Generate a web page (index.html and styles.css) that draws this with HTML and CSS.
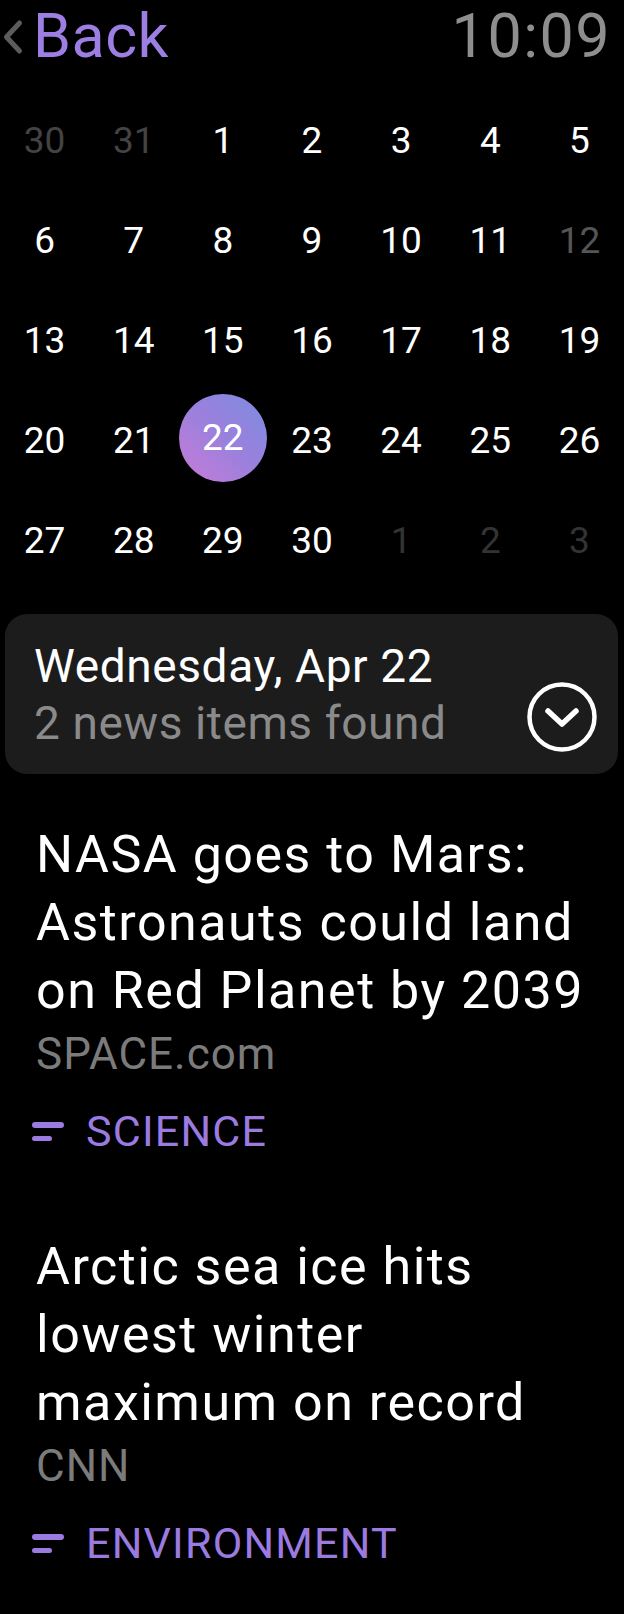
FILE: index.html
```html
<!DOCTYPE html>
<html>
<head>
<meta charset="utf-8">
<link rel="stylesheet" href="styles.css">
</head>
<body>
<div class="screen">
  <header class="topbar">
    <div class="back">
      <svg class="back-chev" width="26" height="72" viewBox="0 0 26 72"><path d="M19.5 23 L6.5 37 L19.5 51" fill="none" stroke="#5c5c5c" stroke-width="5" stroke-linecap="round" stroke-linejoin="round"/></svg>
      <span class="back-label">Back</span>
    </div>
    <div class="time">10:09</div>
  </header>

  <div class="calendar">
    <div class="day prev">30</div><div class="day prev">31</div><div class="day">1</div><div class="day">2</div><div class="day">3</div><div class="day">4</div><div class="day">5</div>
    <div class="day">6</div><div class="day">7</div><div class="day">8</div><div class="day">9</div><div class="day">10</div><div class="day">11</div><div class="day off">12</div>
    <div class="day">13</div><div class="day">14</div><div class="day">15</div><div class="day">16</div><div class="day">17</div><div class="day">18</div><div class="day">19</div>
    <div class="day">20</div><div class="day">21</div><div class="day selected"><span class="sel-circle">22</span></div><div class="day">23</div><div class="day">24</div><div class="day">25</div><div class="day">26</div>
    <div class="day">27</div><div class="day">28</div><div class="day">29</div><div class="day">30</div><div class="day next">1</div><div class="day next">2</div><div class="day next">3</div>
  </div>

  <div class="summary">
    <div class="summary-text">
      <div class="summary-date">Wednesday, Apr 22</div>
      <div class="summary-count">2 news items found</div>
    </div>
    <svg class="summary-icon" width="70" height="70" viewBox="0 0 70 70"><circle cx="35" cy="35" r="32.5" fill="none" stroke="#fff" stroke-width="4.5"/><path d="M21 29 L35 42 L49 29" fill="none" stroke="#fff" stroke-width="5.5" stroke-linecap="round" stroke-linejoin="round"/></svg>
  </div>

  <div class="news">
    <article class="item">
      <h2 class="headline">NASA goes to Mars: Astronauts could land on Red Planet by 2039</h2>
      <div class="source">SPACE.com</div>
      <div class="category">
        <span class="cat-icon"><span class="bar long"></span><span class="bar short"></span></span>
        <span class="cat-label">SCIENCE</span>
      </div>
    </article>
    <article class="item">
      <h2 class="headline">Arctic sea ice hits lowest winter maximum on record</h2>
      <div class="source">CNN</div>
      <div class="category">
        <span class="cat-icon"><span class="bar long"></span><span class="bar short"></span></span>
        <span class="cat-label">ENVIRONMENT</span>
      </div>
    </article>
  </div>
</div>
</body>
</html>
```

FILE: styles.css
```css
html, body {
  margin: 0;
  padding: 0;
  background: #000;
}

body {
  font-family: Roboto, "Liberation Sans", sans-serif;
  color: #fff;
}

.screen {
  width: 624px;
  min-height: 1614px;
  display: flex;
  flex-direction: column;
}

.topbar {
  display: flex;
  justify-content: space-between;
  align-items: flex-start;
  height: 72px;
}

.back {
  display: flex;
  align-items: flex-start;
}

.back-chev {
  display: block;
  margin-left: 0;
  margin-right: 7px;
}

.back-label {
  font-size: 61px;
  line-height: 72px;
  letter-spacing: 0.5px;
  color: #9d7ee3;
}

.time {
  font-size: 61px;
  line-height: 72px;
  letter-spacing: 1.5px;
  color: #8e8e8e;
  margin-right: 13px;
}

.calendar {
  margin-top: 19px;
  display: grid;
  grid-template-columns: repeat(7, 1fr);
  grid-auto-rows: 100px;
}

.day {
  display: flex;
  align-items: center;
  justify-content: center;
  font-size: 37px;
  line-height: 100px;
  color: #fff;
}

.day.prev { color: #434343; }
.day.off { color: #555; }
.day.next { color: #333; }

.sel-circle {
  width: 88px;
  height: 88px;
  border-radius: 50%;
  display: flex;
  align-items: center;
  justify-content: center;
  line-height: 88px;
  background: linear-gradient(to top right, #c97bd7 0%, #9b80dd 50%, #7c8ce0 100%);
  margin-top: -6px;
}

.summary {
  margin: 23px 6px 0 5px;
  background: #1c1c1c;
  border-radius: 22px;
  padding: 24px 21px 22px 29px;
  display: flex;
  justify-content: space-between;
  align-items: flex-end;
}

.summary-date {
  font-size: 46px;
  line-height: 57px;
  letter-spacing: 0.6px;
  color: #fff;
}

.summary-count {
  font-size: 46px;
  line-height: 57px;
  letter-spacing: 0.6px;
  color: #8a8a8a;
}

.summary-icon {
  display: block;
  flex: none;
}

.news {
  display: flex;
  flex-direction: column;
  gap: 74px;
  padding: 47px 10px 0 36px;
}

.headline {
  margin: 0;
  font-size: 52px;
  font-weight: 400;
  line-height: 68px;
  letter-spacing: 1.5px;
  color: #fff;
}

.source {
  margin-top: 1px;
  font-size: 44px;
  line-height: 56px;
  letter-spacing: 1px;
  color: #7b7b7b;
}

.category {
  margin-top: 21px;
  display: flex;
  align-items: center;
  margin-left: -4px;
  height: 56px;
}

.cat-icon {
  width: 32px;
  display: flex;
  flex-direction: column;
  gap: 8px;
  margin-right: 22px;
  margin-top: 1px;
}

.bar {
  display: block;
  height: 5.5px;
  border-radius: 3px;
  background: #9b7be0;
}

.bar.long { width: 32px; }
.bar.short { width: 20px; }

.cat-label {
  font-size: 43px;
  line-height: 56px;
  letter-spacing: 1.2px;
  color: #9b7be0;
}
```
